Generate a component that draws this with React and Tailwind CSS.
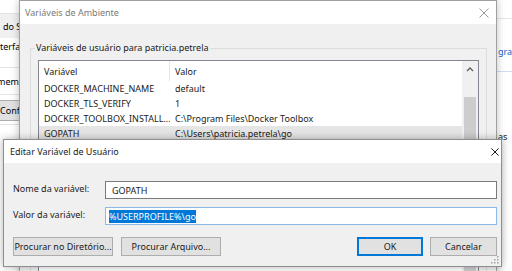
import React from "react";

const rows = [
  { name: "DOCKER_MACHINE_NAME", value: "default" },
  { name: "DOCKER_TLS_VERIFY", value: "1" },
  { name: "DOCKER_TOOLBOX_INSTALL...", value: "C:\\Program Files\\Docker Toolbox" },
  { name: "GOPATH", value: "C:\\Users\\patricia.petrela\\go", selected: true },
];

const CloseX = ({ color, size = 10 }) => (
  <svg width={size} height={size} viewBox="0 0 10 10">
    <path d="M0.5 0.5 L9.5 9.5 M9.5 0.5 L0.5 9.5" stroke={color} strokeWidth={10 / size} fill="none" />
  </svg>
);

const BackgroundWindow = () => (
  <div className="absolute inset-0 bg-white flex justify-between">
    <div className="w-[19px] overflow-hidden whitespace-nowrap flex flex-col">
      <div className="h-[14px] shrink-0 border-b border-[#e3e3e3]" />
      <div className="h-[24px] shrink-0 bg-[#f0f0f0] flex items-center pl-[3px]">do S</div>
      <div className="h-[16px] shrink-0 flex items-center">terfa</div>
      <div className="h-[14px] shrink-0 border-b border-[#e3e3e3]" />
      <div className="h-[26px] shrink-0 flex items-center ml-[-3px]">memó</div>
      <div className="h-[6px] shrink-0 border-t border-[#e3e3e3]" />
      <div className="h-[21px] shrink-0 bg-[#e1e1e1] border-y border-[#adadad] flex items-center">Confi</div>
      <div className="h-[3px] shrink-0" />
      <div className="border-t border-[#e3e3e3]" />
    </div>
    <div className="w-[15px] overflow-hidden whitespace-nowrap flex flex-col">
      <div className="h-[19px] shrink-0 border-b border-[#e6e6e6]" />
      <div className="h-[25px] shrink-0" />
      <div className="h-[14px] shrink-0 flex items-center pl-[1px] text-[#1a66c8]">gram</div>
      <div className="h-[14px] shrink-0 border-b border-[#cfdff3]" />
      <div className="h-[58px] shrink-0" />
      <div className="h-[12px] shrink-0 flex items-center pl-[1px] text-[#1a1a1a]">as</div>
    </div>
  </div>
);

const EnvDialog = () => (
  <div className="absolute left-[19px] top-0 w-[478px] h-[290px] bg-[#f0f0f0] border border-[#a0a0a0] shadow-[0_0_8px_rgba(0,0,0,0.25)] flex flex-col">
    <div className="h-[23px] shrink-0 bg-white flex items-center justify-between pl-[5px] pr-[7px] text-[#7a7a7a]">
      <span>Variáveis de Ambiente</span>
      <CloseX color="#9a9a9a" />
    </div>
    <div className="mt-[24px] ml-[10px] mr-[9px] border border-[#dcdcdc] relative pt-[11px] px-[7px] flex-1">
      <span className="absolute top-[-6px] left-[4px] bg-[#f0f0f0] px-[1px] text-[#1a1a1a]">
        Variáveis de usuário para patricia.petrela
      </span>
      <div className="border border-[#828790] bg-white flex h-[240px]">
        <div className="flex-1 flex flex-col text-[#1a1a1a]">
          <div className="h-[20px] shrink-0 flex">
            <div className="w-[131px] border-r border-[#e5e5e5] flex items-center pl-[5px]">Variável</div>
            <div className="flex-1 flex items-center pl-[5px]">Valor</div>
          </div>
          {rows.map((r) => (
            <div key={r.name} className={`h-[15px] shrink-0 flex leading-[15px] ${r.selected ? "bg-[#e5e5e5]" : ""}`}>
              <div className="w-[131px] pl-[5px] whitespace-nowrap overflow-hidden">{r.name}</div>
              <div className="flex-1 pl-[5px] whitespace-nowrap">{r.value}</div>
            </div>
          ))}
        </div>
        <div className="w-[16px] bg-[#f0f0f0] flex flex-col items-center">
          <div className="h-[17px] shrink-0 flex items-center justify-center">
            <svg width="8" height="5" viewBox="0 0 8 5">
              <path d="M1 4 L4 1 L7 4" stroke="#606060" strokeWidth="1.3" fill="none" />
            </svg>
          </div>
          <div className="h-[19px] shrink-0" />
          <div className="w-[12px] flex-1 bg-[#cdcdcd]" />
        </div>
      </div>
    </div>
  </div>
);

const Button = ({ children, className = "" }) => (
  <div className={`h-[19px] bg-[#e1e1e1] border flex items-center justify-center text-[#1a1a1a] ${className}`}>
    {children}
  </div>
);

const EditDialog = () => (
  <div className="absolute left-[3px] top-[139px] w-[499px] h-[128px] bg-[#f0f0f0] border border-[#8e8e8e] shadow-[0_0_8px_rgba(0,0,0,0.3)] flex flex-col">
    <div className="h-[23px] shrink-0 bg-white flex items-center justify-between pl-[6px] pr-[2px] text-[#1a1a1a]">
      <span>Editar Variável de Usuário</span>
      <CloseX color="#1a1a1a" size={8} />
    </div>
    <div className="flex flex-col pl-[9px] pr-[4px] pt-[18px] text-[#1a1a1a]">
      <div className="flex items-center">
        <div className="w-[92px] mt-[-3px]">Nome da variável:</div>
        <div className="flex-1 h-[18px] bg-white border border-[#7a7a7a] flex items-center pl-[6px]">GOPATH</div>
      </div>
      <div className="flex items-center mt-[8px]">
        <div className="w-[92px] mt-[-4px]">Valor da variável:</div>
        <div className="flex-1 h-[18px] bg-white border border-[#8cb8e8] flex items-center pl-[3px]">
          <span className="bg-[#0078d7] text-white leading-[13px]">%USERPROFILE%\go</span>
        </div>
      </div>
      <div className="flex mt-[12px]">
        <Button className="w-[100px] border-[#adadad]">Procurar no Diretório...</Button>
        <Button className="w-[100px] ml-[8px] border-[#adadad]">Procurar Arquivo...</Button>
        <div className="flex-1" />
        <Button className="w-[66px] border-2 border-[#0078d7]">OK</Button>
        <Button className="w-[67px] ml-[7px] border-[#adadad]">Cancelar</Button>
      </div>
    </div>
    <svg className="absolute right-[2px] bottom-[2px]" width="8" height="8" viewBox="0 0 8 8">
      <g fill="#a0a0a0">
        <rect x="6" y="0" width="1.5" height="1.5" />
        <rect x="3" y="3" width="1.5" height="1.5" />
        <rect x="6" y="3" width="1.5" height="1.5" />
        <rect x="0" y="6" width="1.5" height="1.5" />
        <rect x="3" y="6" width="1.5" height="1.5" />
        <rect x="6" y="6" width="1.5" height="1.5" />
      </g>
    </svg>
  </div>
);

export default function App() {
  return (
    <div className="relative w-[512px] h-[271px] overflow-hidden bg-white font-['Noto_Sans',sans-serif] text-[9px] leading-none">
      <BackgroundWindow />
      <EnvDialog />
      <EditDialog />
    </div>
  );
}
